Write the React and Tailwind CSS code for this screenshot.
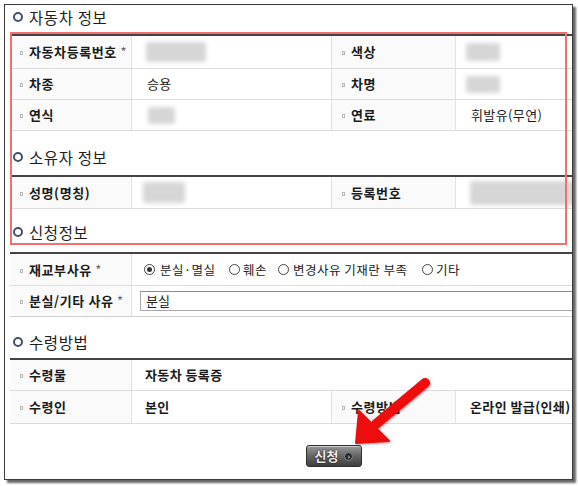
import React from "react";

const KF = { fontFamily: '"Noto Sans CJK KR", "Noto Sans", sans-serif' };

function Title({ children, h, pb }) {
  return (
    <div className={`flex items-end ${h} ${pb}`}>
      <div className="flex items-center h-[20px]">
        <span className="ml-[3px] w-[10px] h-[10px] rounded-full border-[2.5px] border-[#44506a] bg-white" />
        <span className="ml-[6px] text-[15.5px] tracking-[0.6px] leading-[20px] text-[#1e1e1e]" style={KF}>
          {children}
        </span>
      </div>
    </div>
  );
}

function Label({ children, star, w = "w-[122px]" }) {
  return (
    <div className={`${w} shrink-0 h-full flex items-center bg-[#fafafa] border-r border-[#e2e2e2] pl-[10px]`}>
      <span className="w-[3px] h-[4px] border border-[#b8b8b8] mr-[6px] mt-[2px]" />
      <span className="text-[13px] tracking-[0.6px] font-bold text-[#1a1a1a] leading-[16px] whitespace-nowrap" style={KF}>
        {children}
        {star && <span className="text-[#666] font-normal"> *</span>}
      </span>
    </div>
  );
}

function Val({ children, w, bold, pl = "pl-[15px]", noBorder }) {
  return (
    <div className={`${w} shrink-0 h-full flex items-center ${pl} ${noBorder ? "" : "border-r border-[#e2e2e2]"}`}>
      <span className={`text-[13px] tracking-[0.4px] ${bold ? "font-bold" : ""} text-[#1a1a1a] leading-[16px] whitespace-nowrap`} style={KF}>
        {children}
      </span>
    </div>
  );
}

function Blur({ w, h, ml = "ml-0" }) {
  return <div className={`${ml} ${w} ${h} bg-[#d6d6d6] blur-[2px] rounded-[2px]`} />;
}

function Radio({ checked }) {
  return (
    <span className="w-[11px] h-[11px] rounded-full border border-[#444] bg-white flex items-center justify-center shrink-0">
      {checked && <span className="w-[5px] h-[5px] rounded-full bg-[#333]" />}
    </span>
  );
}

export default function App() {
  return (
    <div className="relative w-[578px] h-[486px] bg-white overflow-hidden">
      <div className="ml-[4px] mt-[4px] w-[569px] h-[476px] border border-[#3c3c3c] bg-white overflow-hidden shadow-[3px_3px_2px_rgba(0,0,0,0.6)]">
        <div className="pl-[5px] w-[620px]">
          <Title h="h-[29px]" pb="pb-[7px]">자동차 정보</Title>

          <div className="border-t-2 border-[#444]">
            <div className="flex h-[33px] border-b border-[#dcdcdc]">
              <Label star>자동차등록번호</Label>
              <div className="w-[200px] shrink-0 h-full flex items-center border-r border-[#e2e2e2]">
                <Blur ml="ml-[14px]" w="w-[60px]" h="h-[20px]" />
              </div>
              <Label w="w-[124px]">색상</Label>
              <div className="w-[160px] shrink-0 h-full flex items-center">
                <Blur ml="ml-[10px]" w="w-[34px]" h="h-[18px]" />
              </div>
            </div>
            <div className="flex h-[31px] border-b border-[#dcdcdc]">
              <Label>차종</Label>
              <Val w="w-[200px]">승용</Val>
              <Label w="w-[124px]">차명</Label>
              <div className="w-[160px] shrink-0 h-full flex items-center">
                <Blur ml="ml-[10px]" w="w-[34px]" h="h-[17px]" />
              </div>
            </div>
            <div className="flex h-[31px] border-b border-[#dcdcdc]">
              <Label>연식</Label>
              <div className="w-[200px] shrink-0 h-full flex items-center border-r border-[#e2e2e2]">
                <Blur ml="ml-[16px]" w="w-[27px]" h="h-[17px]" />
              </div>
              <Label w="w-[124px]">연료</Label>
              <Val w="w-[160px]">휘발유(무연)</Val>
            </div>
          </div>

          <Title h="h-[44px]" pb="pb-[8px]">소유자 정보</Title>

          <div className="border-t-2 border-[#444]">
            <div className="flex h-[32px] border-b border-[#dcdcdc]">
              <Label>성명(명칭)</Label>
              <div className="w-[200px] shrink-0 h-full flex items-center border-r border-[#e2e2e2]">
                <Blur ml="ml-[11px]" w="w-[42px]" h="h-[21px]" />
              </div>
              <Label w="w-[124px]">등록번호</Label>
              <div className="w-[160px] shrink-0 h-full flex items-center">
                <Blur ml="ml-[14px]" w="w-[110px]" h="h-[24px]" />
              </div>
            </div>
          </div>

          <Title h="h-[43px]" pb="pb-[10px]">신청정보</Title>

          <div className="border-t-2 border-[#444]">
            <div className="flex h-[32px] border-b border-[#dcdcdc]">
              <Label star>재교부사유</Label>
              <div className="flex items-center h-full pl-[12px] text-[12.5px] tracking-[0.5px] text-[#222] leading-[16px] whitespace-nowrap" style={KF}>
                <Radio checked />
                <span className="ml-[5px] w-[60px]">분실·멸실</span>
                <span className="ml-[9px]"><Radio /></span>
                <span className="ml-[3px] w-[32px]">훼손</span>
                <span className="ml-[3px]"><Radio /></span>
                <span className="ml-[4px] w-[126px]">변경사유 기재란 부족</span>
                <span className="ml-[3px]"><Radio /></span>
                <span className="ml-[3px]">기타</span>
              </div>
            </div>
            <div className="flex h-[31px] border-b border-[#d0d0d0]">
              <Label star>분실/기타 사유</Label>
              <div className="flex-1 h-full flex items-center pl-[8px]">
                <div className="w-full h-[20px] border border-[#a8a8a8] border-t-[#8c8c8c] bg-white flex items-center pl-[5px]">
                  <span className="text-[13px] text-[#222] leading-[16px]" style={KF}>분실</span>
                </div>
              </div>
            </div>
          </div>

          <Title h="h-[41px]" pb="pb-[6px]">수령방법</Title>

          <div className="border-t-2 border-[#444]">
            <div className="flex h-[31px] border-b border-[#dcdcdc]">
              <Label>수령물</Label>
              <Val w="w-[300px]" bold pl="pl-[13px]" noBorder>자동차 등록증</Val>
            </div>
            <div className="flex h-[33px] border-b border-[#dcdcdc]">
              <Label>수령인</Label>
              <Val w="w-[200px]" bold pl="pl-[13px]">본인</Val>
              <Label w="w-[124px]">수령방법</Label>
              <Val w="w-[160px]" bold pl="pl-[14px]">온라인 발급(인쇄)</Val>
            </div>
          </div>

          <div className="flex pl-[296px] pt-[21px]">
            <button className="w-[56px] h-[22px] rounded-[3px] border border-[#2e2e2e] bg-gradient-to-b from-[#9a9a9a] via-[#666] to-[#3e3e3e] shadow-[inset_0_1px_0_rgba(255,255,255,0.5)] flex items-center justify-center gap-[6px]">
              <span className="text-[13px] font-bold text-[#eee] leading-[16px] [text-shadow:0_0_2px_#000]" style={KF}>신청</span>
              <span className="w-[9px] h-[9px] rounded-full bg-[#2a2a2a] border border-[#888] flex items-center justify-center text-[7px] leading-none text-white">›</span>
            </button>
          </div>
        </div>
      </div>

      <div className="absolute left-[10px] top-[32px] w-[557px] h-[213px] border-2 border-[#f07070] pointer-events-none" />

      <svg className="absolute left-0 top-0 pointer-events-none" width="578" height="486" viewBox="0 0 578 486">
        <defs>
          <filter id="ds" x="-20%" y="-20%" width="140%" height="140%">
            <feDropShadow dx="1" dy="1" stdDeviation="1" floodColor="#000" floodOpacity="0.35" />
          </filter>
        </defs>
        <g filter="url(#ds)" fill="#ee1111" stroke="#ee1111">
          <line x1="425" y1="383" x2="376" y2="424" strokeWidth="10" strokeLinecap="round" />
          <polygon points="356,443 359,411 389,441" strokeWidth="2" strokeLinejoin="round" />
        </g>
      </svg>
    </div>
  );
}
